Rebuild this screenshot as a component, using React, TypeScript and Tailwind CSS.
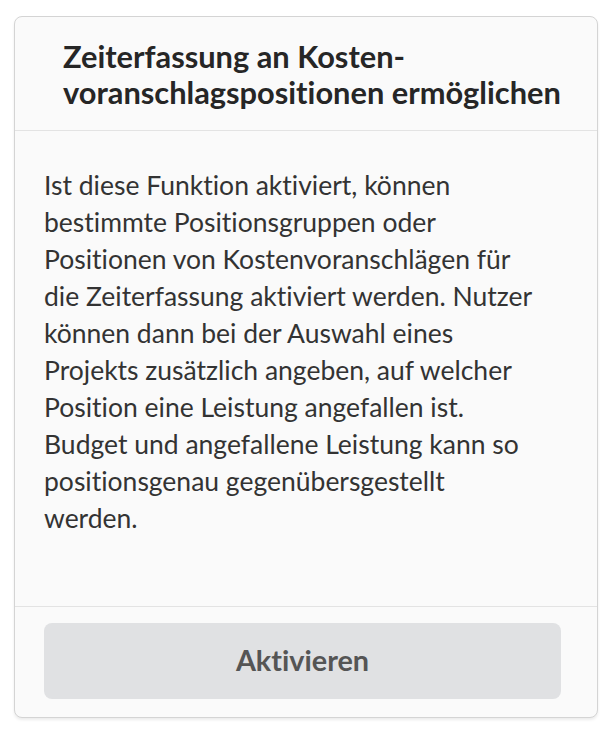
const lines = [
  'Ist diese Funktion aktiviert, können',
  'bestimmte Positionsgruppen oder',
  'Positionen von Kostenvoranschlägen für',
  'die Zeiterfassung aktiviert werden. Nutzer',
  'können dann bei der Auswahl eines',
  'Projekts zusätzlich angeben, auf welcher',
  'Position eine Leistung angefallen ist.',
  'Budget und angefallene Leistung kann so',
  'positionsgenau gegenübersgestellt',
  'werden.',
]

export default function App() {
  return (
    <div className="min-h-screen bg-white pt-4 pl-[14px] pr-[18px]" style={{ fontFamily: 'Lato, "Noto Sans", sans-serif' }}>
      <div className="flex flex-col rounded-lg border border-[#d4d4d4] bg-[#fafafa] shadow-[0_2px_3px_rgba(0,0,0,0.08)] [font-variant-ligatures:none]">
        <div className="border-b border-[#e3e3e3] pl-[48px] pr-2 pt-[22px] pb-[19px]">
          <h2 className="text-[30.8px] font-bold leading-[36px] text-[#262626]">
            Zeiterfassung an Kosten-
            <br />
            voranschlagspositionen ermöglichen
          </h2>
        </div>
        <div className="border-b border-[#e3e3e3] pl-[29px] pr-4 pt-[36px] pb-[69px]">
          <p className="text-[26.5px] leading-[37px] text-[#333333] whitespace-nowrap">
            {lines.map((l, i) => (
              <span key={i} className="block">{l}</span>
            ))}
          </p>
        </div>
        <div className="pl-[29px] pr-[36px] pt-4 pb-[18px]">
          <button className="flex h-[76px] w-full items-center justify-center rounded-lg bg-[#e0e1e3] text-[28.8px] font-bold text-[#555555]">
            Aktivieren
          </button>
        </div>
      </div>
    </div>
  );
}
